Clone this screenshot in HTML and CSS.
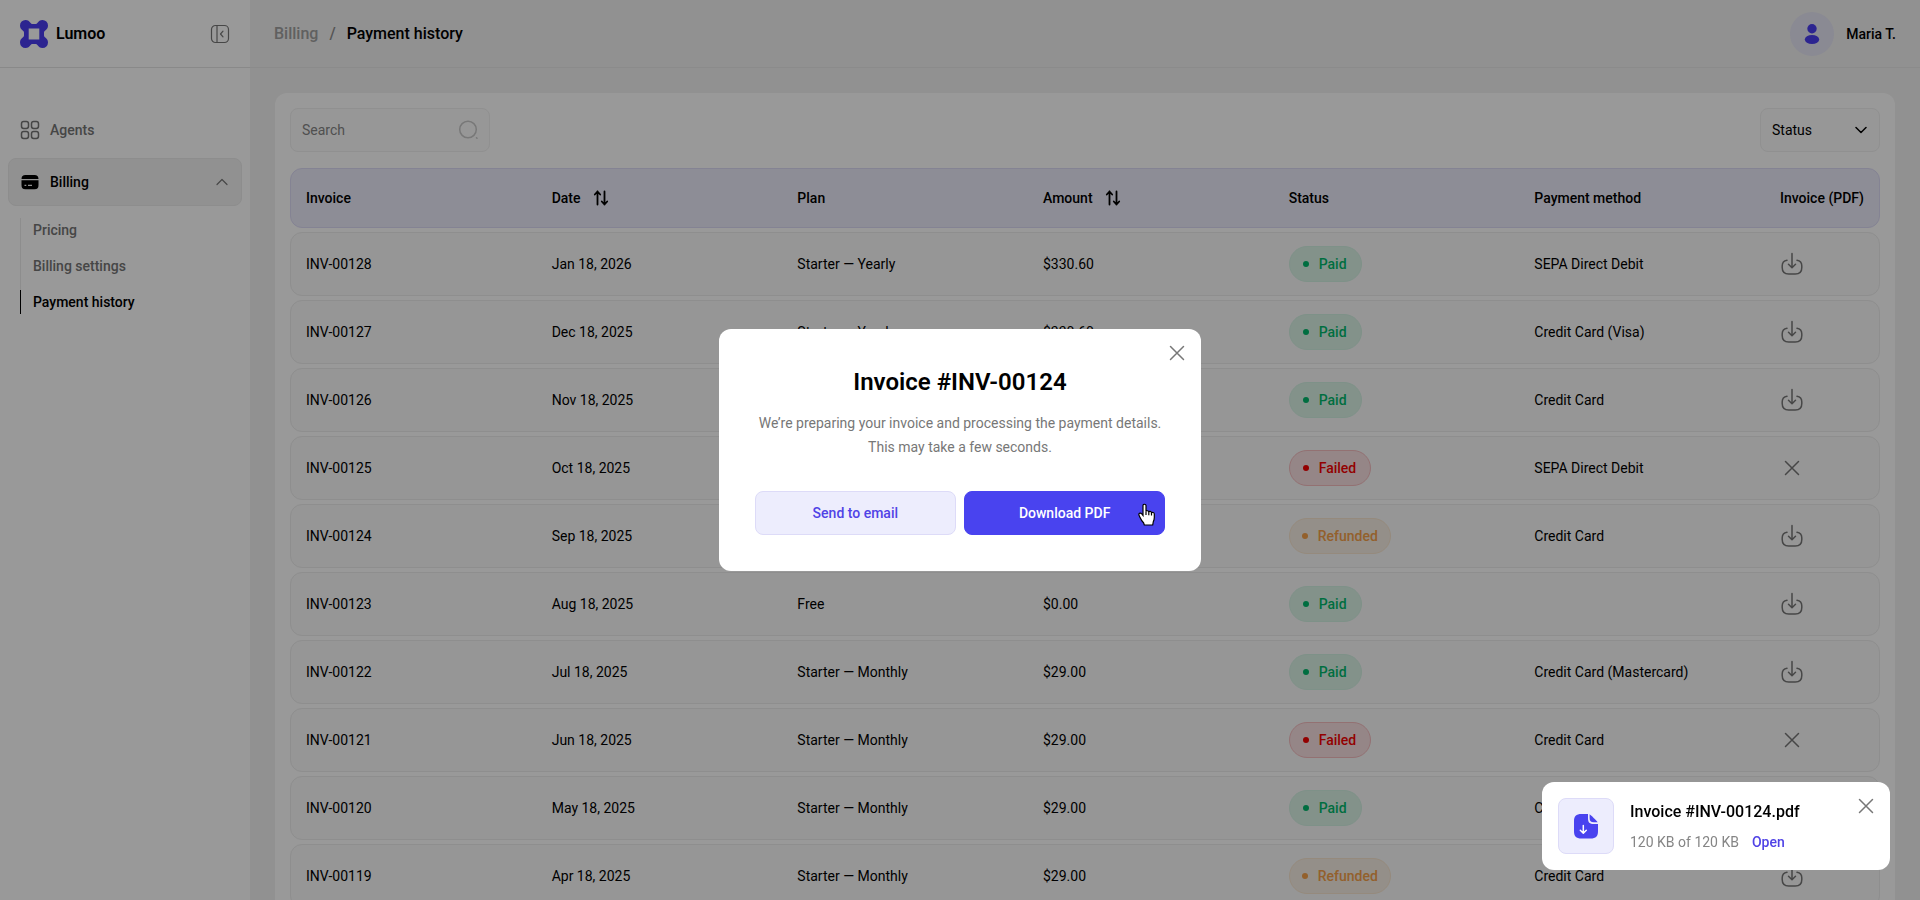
FILE: index.html
```html
<!DOCTYPE html>
<html lang="en">
<head>
<meta charset="utf-8">
<meta name="viewport" content="width=device-width, initial-scale=1">
<title>Lumoo – Payment history</title>
<link rel="stylesheet" href="styles.css">
</head>
<body>
<svg class="sprite" aria-hidden="true">
  <symbol id="i-download" viewBox="0 0 24 24"><path d="M12 1.500v14M8.500 12.200l3.500 3.500 3.500-3.500M7 8.300C3.700 8.800 2.200 10.500 2.200 14v1.500c0 4.500 2 6.500 6.500 6.500h6.600c4.500 0 6.500-2 6.500-6.500V14c0-3.500-1.500-5.200-4.800-5.700"/></symbol>
  <symbol id="i-close" viewBox="0 0 24 24"><path d="M5.500 5.500l13 13M18.500 5.500l-13 13"/></symbol>
  <symbol id="i-sort" viewBox="0 0 16 16"><path d="M4.500 14.500V1.500M1.800 4.500l2.700-3 2.700 3M11.500 1.500v13M8.800 11.500l2.700 3 2.700-3"/></symbol>
</svg>
<div class="app">
  <aside class="sidebar">
    <div class="brand">
      <svg class="brand-mark" viewBox="0 0 28 28" aria-hidden="true"><path fill-rule="evenodd" d="M5.500 0C8 0 9.300 1.200 10.400 2.700 11 3.600 11.700 4 12.700 4h2.600c1 0 1.700-.4 2.300-1.300C18.700 1.200 20 0 22.500 0A5.500 5.500 0 0 1 28 5.500c0 2.500-1.200 3.800-2.700 4.900-.9.600-1.300 1.300-1.300 2.300v2.600c0 1 .4 1.700 1.300 2.300 1.500 1.100 2.700 2.400 2.700 4.900a5.500 5.500 0 0 1-5.500 5.500c-2.500 0-3.800-1.200-4.900-2.700-.6-.9-1.300-1.300-2.300-1.300h-2.600c-1 0-1.700.4-2.300 1.300C9.300 26.800 8 28 5.500 28A5.500 5.500 0 0 1 0 22.500c0-2.500 1.200-3.800 2.700-4.900.9-.6 1.300-1.300 1.300-2.300v-2.600c0-1-.4-1.700-1.300-2.300C1.200 9.300 0 8 0 5.500A5.500 5.500 0 0 1 5.500 0zM8.700 8.500v11h10.600v-11z"/></svg>
      <span class="brand-name">Lumoo</span>
      <button class="icon-button collapse" type="button" aria-label="Collapse sidebar">
        <svg class="icon" viewBox="0 0 20 20"><rect x="1.500" y="1.500" width="17" height="17" rx="4"/><path d="M7 1.500v17M13 7.200l-2.500 2.800 2.500 2.800"/></svg>
      </button>
    </div>
    <nav class="nav" aria-label="Main">
      <a class="nav-item" href="#agents">
        <svg class="icon" viewBox="0 0 20 20" aria-hidden="true"><rect x="1.500" y="1.500" width="7" height="7" rx="2.200"/><rect x="11.500" y="1.500" width="7" height="7" rx="2.200"/><rect x="1.500" y="11.500" width="7" height="7" rx="2.200"/><rect x="11.500" y="11.500" width="7" height="7" rx="2.200"/></svg>
        Agents
      </a>
      <a class="nav-item nav-item-open" href="#billing">
        <svg class="nav-card" viewBox="0 0 20 20" aria-hidden="true"><path d="M1.500 7C1.700 4 2.800 3 5.500 3h9c2.700 0 3.800 1 4 4zM1.500 8.200h17V13c0 3-1 4.200-4 4.200h-9c-3 0-4-1.200-4-4.200zM4.500 12.800v1.300h1.800v-1.300zM8 12.800v1.300h4v-1.300z" fill-rule="evenodd"/></svg>
        Billing
        <svg class="icon nav-chevron" viewBox="0 0 12 12" aria-hidden="true"><path d="M1 8.500l5-5 5 5"/></svg>
      </a>
      <div class="subnav">
        <a class="subnav-item" href="#pricing">Pricing</a>
        <a class="subnav-item" href="#settings">Billing settings</a>
        <a class="subnav-item subnav-current" href="#history" aria-current="page">Payment history</a>
      </div>
    </nav>
  </aside>

  <div class="page">
    <header class="topbar">
      <nav class="crumbs" aria-label="Breadcrumb">
        <a class="crumb" href="#billing">Billing</a>
        <span class="crumb-sep">/</span>
        <span class="crumb-current">Payment history</span>
      </nav>
      <div class="user">
        <span class="avatar"><svg viewBox="0 0 20 20" aria-hidden="true"><circle cx="10" cy="4.700" r="4.700"/><ellipse cx="10" cy="15.500" rx="7.200" ry="4.500"/></svg></span>
        Maria T.
      </div>
    </header>

    <main class="content">
      <section class="card">
        <div class="toolbar">
          <label class="search">
            <input class="search-input" type="search" placeholder="Search" aria-label="Search">
            <svg class="icon" viewBox="0 0 20 20" aria-hidden="true"><circle cx="10" cy="9.500" r="8.300"/><path d="M18.500 17.800l.5.500"/></svg>
          </label>
          <div class="filter">
            <select class="filter-select" aria-label="Status"><option>Status</option></select>
            <svg class="icon" viewBox="0 0 12 12" aria-hidden="true"><path d="M1 3.500l5 5 5-5"/></svg>
          </div>
        </div>
        <table class="table">
          <thead>
            <tr class="row row-head">
              <th>Invoice</th>
              <th>Date <button class="sort" type="button" aria-label="Sort by date"><svg class="icon"><use href="#i-sort"/></svg></button></th>
              <th>Plan</th>
              <th>Amount <button class="sort" type="button" aria-label="Sort by amount"><svg class="icon"><use href="#i-sort"/></svg></button></th>
              <th>Status</th><th>Payment method</th><th>Invoice (PDF)</th>
            </tr>
          </thead>
          <tbody>
            <tr class="row"><td>INV-00128</td><td>Jan 18, 2026</td><td>Starter — Yearly</td><td>$330.60</td><td><span class="pill paid">Paid</span></td><td>SEPA Direct Debit</td><td><button class="icon-button" type="button" aria-label="Download INV-00128"><svg class="icon"><use href="#i-download"/></svg></button></td></tr>
            <tr class="row"><td>INV-00127</td><td>Dec 18, 2025</td><td>Starter — Yearly</td><td>$330.60</td><td><span class="pill paid">Paid</span></td><td>Credit Card (Visa)</td><td><button class="icon-button" type="button" aria-label="Download INV-00127"><svg class="icon"><use href="#i-download"/></svg></button></td></tr>
            <tr class="row"><td>INV-00126</td><td>Nov 18, 2025</td><td>Starter — Monthly</td><td>$29.00</td><td><span class="pill paid">Paid</span></td><td>Credit Card</td><td><button class="icon-button" type="button" aria-label="Download INV-00126"><svg class="icon"><use href="#i-download"/></svg></button></td></tr>
            <tr class="row"><td>INV-00125</td><td>Oct 18, 2025</td><td>Starter — Monthly</td><td>$29.00</td><td><span class="pill failed">Failed</span></td><td>SEPA Direct Debit</td><td><svg class="icon unavailable" role="img" aria-label="Not available"><use href="#i-close"/></svg></td></tr>
            <tr class="row"><td>INV-00124</td><td>Sep 18, 2025</td><td>Starter — Monthly</td><td>$29.00</td><td><span class="pill refunded">Refunded</span></td><td>Credit Card</td><td><button class="icon-button" type="button" aria-label="Download INV-00124"><svg class="icon"><use href="#i-download"/></svg></button></td></tr>
            <tr class="row"><td>INV-00123</td><td>Aug 18, 2025</td><td>Free</td><td>$0.00</td><td><span class="pill paid">Paid</span></td><td></td><td><button class="icon-button" type="button" aria-label="Download INV-00123"><svg class="icon"><use href="#i-download"/></svg></button></td></tr>
            <tr class="row"><td>INV-00122</td><td>Jul 18, 2025</td><td>Starter — Monthly</td><td>$29.00</td><td><span class="pill paid">Paid</span></td><td>Credit Card (Mastercard)</td><td><button class="icon-button" type="button" aria-label="Download INV-00122"><svg class="icon"><use href="#i-download"/></svg></button></td></tr>
            <tr class="row"><td>INV-00121</td><td>Jun 18, 2025</td><td>Starter — Monthly</td><td>$29.00</td><td><span class="pill failed">Failed</span></td><td>Credit Card</td><td><svg class="icon unavailable" role="img" aria-label="Not available"><use href="#i-close"/></svg></td></tr>
            <tr class="row"><td>INV-00120</td><td>May 18, 2025</td><td>Starter — Monthly</td><td>$29.00</td><td><span class="pill paid">Paid</span></td><td>Credit Card</td><td><button class="icon-button" type="button" aria-label="Download INV-00120"><svg class="icon"><use href="#i-download"/></svg></button></td></tr>
            <tr class="row"><td>INV-00119</td><td>Apr 18, 2025</td><td>Starter — Monthly</td><td>$29.00</td><td><span class="pill refunded">Refunded</span></td><td>Credit Card</td><td><button class="icon-button" type="button" aria-label="Download INV-00119"><svg class="icon"><use href="#i-download"/></svg></button></td></tr>
          </tbody>
        </table>
      </section>
    </main>
  </div>
</div>

<div class="overlay">
  <div class="modal" role="dialog" aria-modal="true" aria-labelledby="modal-title">
    <button class="icon-button close" type="button" aria-label="Close"><svg class="icon"><use href="#i-close"/></svg></button>
    <h2 class="modal-title" id="modal-title">Invoice #INV-00124</h2>
    <p class="modal-text">We’re preparing your invoice and processing the payment details.<br>This may take a few seconds.</p>
    <div class="modal-actions">
      <button class="button" type="button">Send to email</button>
      <button class="button button-primary" type="button">Download PDF
        <svg class="pointer" viewBox="0 0 18 24" aria-hidden="true"><path d="M5 2.500C5 .8 8 .8 8 2.500v6c.2-1.200 2.600-1 2.800.5.400-1.100 2.600-.7 2.700.8.700-.9 2.800-.4 2.800 1.200v3.500c0 2-.3 2.700-1 4.200L14.700 22H6.300l-.6-2C4.300 18.500 3 16.800 2.200 14.800 1.700 13.500.8 12.300.8 11.300c.2-1.500 2-1.600 3-.4L5 12.500z"/><path d="M8 8.500V12M10.800 9v3.200M13.500 9.800v2.800"/></svg>
      </button>
    </div>
  </div>
  <div class="toast" role="status">
    <span class="toast-tile"><svg viewBox="0 0 24 24" aria-hidden="true"><path class="doc" d="M14 0H7.500C2 0 0 2 0 7.500v9.500c0 5.500 2 7.500 7.500 7.500h9c5.500 0 7.500-2 7.500-7.500v-7h-4c-4.500 0-6-1.500-6-6z"/><path class="doc" d="M15.600.3c.8.300 7.500 6.900 8 8h-3.800c-3 0-4.200-1.200-4.200-4.200z"/><path class="arrow" d="M9.300 11.500V19M6.300 16.200l3 3 3-3"/></svg></span>
    <div class="toast-body">
      <strong class="toast-title">Invoice #INV-00124.pdf</strong>
      <div class="toast-meta">120 KB of 120 KB <a class="toast-link" href="#open">Open</a></div>
    </div>
    <button class="icon-button close" type="button" aria-label="Dismiss"><svg class="icon"><use href="#i-close"/></svg></button>
  </div>
</div>
</body>
</html>
```
FILE: styles.css
```css
* { box-sizing: border-box; }

body {
  margin: 0;
  overflow: hidden;
  font: 400 14px/20px Roboto, sans-serif;
  color: #000;
}

a { color: inherit; text-decoration: none; }
button, input, select { font: inherit; color: inherit; }
svg { display: block; flex: none; }

.sprite { position: absolute; width: 0; height: 0; }

.icon {
  width: 24px;
  height: 24px;
  fill: none;
  stroke: currentColor;
  stroke-width: 1.5;
  stroke-linecap: round;
  stroke-linejoin: round;
}

.icon-button {
  display: block;
  padding: 0;
  border: 0;
  background: none;
  color: #777;
  cursor: pointer;
}

.app { display: flex; height: 100vh; }

/* Sidebar */
.sidebar { flex: none; width: 250px; background: #fff; }

.brand {
  display: flex;
  align-items: center;
  gap: 8px;
  height: 68px;
  padding: 0 20px;
  border-bottom: 1px solid #e4e4e4;
}
.brand-mark { width: 28px; height: 28px; fill: #4a3df0; }
.brand-name { font-size: 16px; font-weight: 600; }
.collapse { margin-left: auto; }
.collapse .icon { width: 20px; height: 20px; stroke-width: 1.2; }

.nav { display: flex; flex-direction: column; gap: 4px; padding: 38px 8px; font-weight: 500; color: #757575; }
.nav-item {
  display: flex;
  align-items: center;
  gap: 10px;
  height: 48px;
  padding: 0 12px;
  border-radius: 8px;
}
.nav-item .icon, .nav-card { width: 20px; height: 20px; }
.nav-item-open { background: #f2f2f2; border: 1px solid #ebebeb; padding: 0 11px; color: #000; }
.nav-item .nav-chevron { width: 12px; height: 12px; margin: 0 2px 0 auto; color: #777; stroke-width: 1.2; }

.subnav {
  display: flex;
  flex-direction: column;
  gap: 12px;
  margin: 8px 12px;
  border-left: 1px solid #ebebeb;
}
.subnav-item { margin-left: -1px; padding-left: 12px; border-left: 1px solid transparent; line-height: 24px; }
.subnav-current { border-color: #000; color: #000; }

/* Page */
.page { flex: 1; min-width: 0; overflow: hidden; background: #f2f2f2; }

.topbar {
  display: flex;
  align-items: center;
  justify-content: space-between;
  height: 68px;
  padding: 0 24px;
  border-bottom: 1px solid #e8e8e8;
  font-weight: 500;
}
.crumbs { display: flex; gap: 11px; font-size: 16px; }
.crumb { color: #a0a0a0; }
.crumb-sep { color: #8c8c8c; }
.user { display: flex; align-items: center; gap: 12px; }
.avatar { display: grid; place-items: center; width: 44px; height: 44px; border-radius: 50%; background: #e6e6f5; }
.avatar svg { width: 20px; height: 20px; fill: #4a3df0; }

.content { padding: 25px; }
.card { padding: 15px; border-radius: 12px; background: #fff; }

.toolbar { display: flex; justify-content: space-between; margin-bottom: 16px; }
.search, .filter {
  display: flex;
  align-items: center;
  height: 44px;
  border: 1px solid #f0f0f0;
  border-radius: 8px;
  background: #fcfcfc;
}
.search { width: 200px; padding: 0 11px; }
.search .icon { width: 20px; height: 20px; color: #c8c8c8; }
.search-input { flex: 1; min-width: 0; padding: 0; border: 0; outline: 0; background: none; }
.search-input::placeholder { color: #858585; opacity: 1; }
.filter { position: relative; width: 120px; }
.filter-select { width: 100%; height: 100%; padding: 0 11px; border: 0; background: none; appearance: none; }
.filter .icon { position: absolute; right: 12px; width: 12px; height: 12px; pointer-events: none; }

/* Table */
.table { display: block; }
.table thead, .table tbody { display: grid; gap: 4px; }
.table tbody { margin-top: 4px; }
.row {
  display: grid;
  grid-template-columns: repeat(6, 1fr) 84px;
  align-items: center;
  height: 64px;
  padding: 0 15px;
  border: 1px solid #ededed;
  border-radius: 12px;
  background: #fafafa;
}
.row-head { height: 60px; border-color: #dcdaf6; background: #ececfa; }
.row th, .row td { display: flex; align-items: center; padding: 0; white-space: nowrap; }
.row th { font-weight: 500; }

.sort { margin-left: 12px; padding: 0; border: 0; background: none; }
.sort .icon { width: 16px; height: 16px; stroke-width: 1.8; }
.unavailable { color: #777; }

.pill {
  display: flex;
  align-items: center;
  gap: 10px;
  height: 36px;
  padding: 0 14px 0 13px;
  border: 1px solid currentColor;
  border-radius: 18px;
  font-weight: 500;
}
.pill::before { content: ""; width: 6px; height: 6px; border-radius: 50%; background: currentColor; }
.paid { color: #00b86b; border-color: #d3f2e3; background: #dbf3e7; }
.failed { color: #f50000; border-color: #f5bcbf; background: #f8dfe1; }
.refunded { padding: 0 12px; color: #f5a04a; border-color: #f8e6d0; background: #f7efe4; }

/* Layers over the page */
.overlay {
  position: fixed;
  inset: 0;
  display: grid;
  place-items: center;
  background: rgba(0, 0, 0, 0.4);
}

.close { position: absolute; top: 12px; right: 12px; }

.modal {
  position: relative;
  padding: 36px;
  border-radius: 12px;
  background: #fff;
  text-align: center;
}
.modal-title { margin: 0 0 12px; font-size: 24px; font-weight: 600; line-height: 34px; }
.modal-text { margin: 0 4px 32px; line-height: 24px; color: #777; }
.modal-actions { display: grid; grid-template-columns: 1fr 1fr; gap: 8px; }

.button {
  position: relative;
  height: 44px;
  border: 1px solid #dddbf8;
  border-radius: 8px;
  background: #ededfd;
  font-weight: 500;
  color: #5043e6;
  cursor: pointer;
}
.button-primary { border-color: #4943ef; background: #4943ef; color: #fff; }

.pointer {
  position: absolute;
  top: 11px;
  right: 8px;
  width: 18px;
  height: 24px;
  fill: #fff;
  stroke: #000;
  stroke-width: 1.2;
}

.toast {
  position: absolute;
  right: 30px;
  bottom: 30px;
  display: flex;
  align-items: center;
  gap: 16px;
  width: 348px;
  padding: 16px;
  border-radius: 12px;
  background: #fff;
}
.toast-tile {
  display: grid;
  place-items: center;
  width: 56px;
  height: 56px;
  border: 1px solid #dddbf8;
  border-radius: 8px;
  background: #ededfd;
}
.toast-tile svg { width: 24px; height: 24px; overflow: visible; }
.doc { fill: #4943ef; }
.arrow { fill: none; stroke: #fff; stroke-width: 1.5; stroke-linecap: round; stroke-linejoin: round; }
.toast-body { display: grid; gap: 6px; padding-top: 2px; }
.toast-title { font-size: 16px; font-weight: 500; line-height: 24px; }
.toast-meta { display: flex; gap: 13px; line-height: 24px; color: #858585; }
.toast-link { font-weight: 500; color: #5043e6; }
```
